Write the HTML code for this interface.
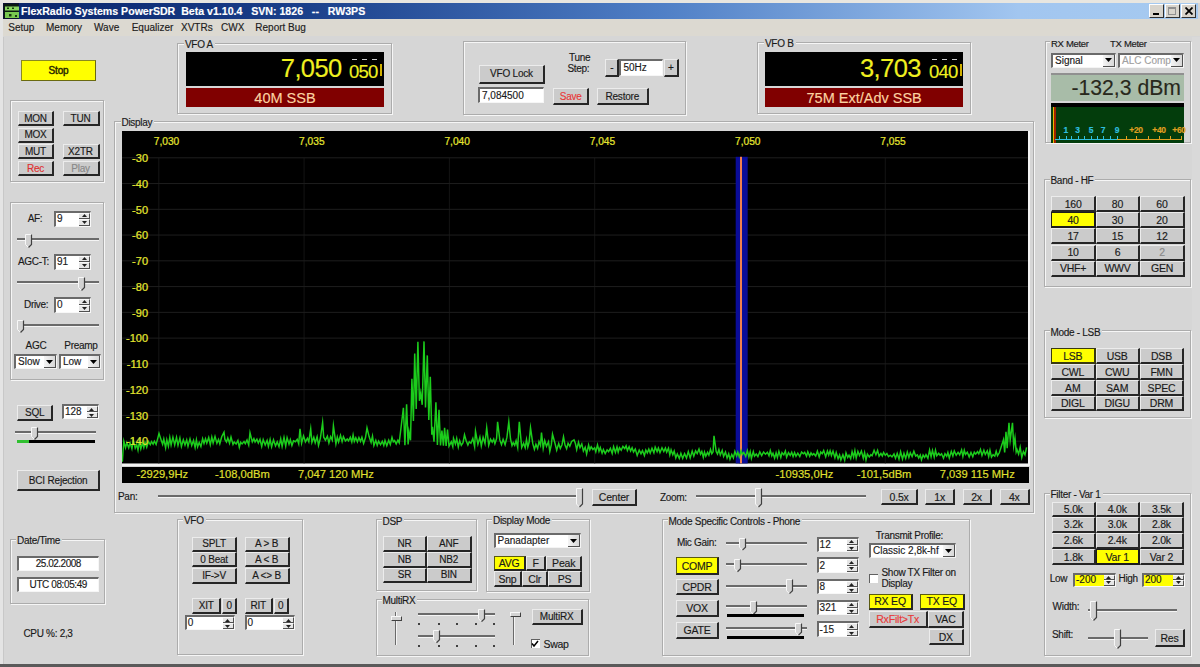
<!DOCTYPE html><html><head><meta charset="utf-8"><style>
*{margin:0;padding:0;box-sizing:border-box}
html,body{width:1200px;height:667px;overflow:hidden;background:#d6d6d6;font-family:"Liberation Sans",sans-serif;position:relative}
.t,.btn,.btnY,.gl,.spin,.combo,.txt{-webkit-text-stroke:0.15px currentColor}
.a{position:absolute}
.t{position:absolute;white-space:nowrap;line-height:1}
.btn{position:absolute;padding-top:1px;letter-spacing:-0.2px;background:#cbcbcb;border-top:1px solid #ececec;border-left:1px solid #ececec;border-right:2px solid #262626;border-bottom:2px solid #262626;display:flex;align-items:center;justify-content:center;white-space:nowrap;line-height:1}
.btnY{position:absolute;padding-top:1px;letter-spacing:-0.2px;background:#ffff00;border:1px solid #5a5a10;border-right:2px solid #262626;border-bottom:2px solid #262626;display:flex;align-items:center;justify-content:center;white-space:nowrap;line-height:1}
.grp{position:absolute;border:1px solid #acacac;box-shadow:inset 1px 1px 0 #f6f6f6, 1px 1px 0 #f6f6f6}
.gl{position:absolute;background:#d6d6d6;padding:0 2px 0 1px;letter-spacing:-0.3px;line-height:10px;height:10px;color:#1a1a1a;white-space:nowrap}
.spin{position:absolute;border-top:2px solid #6a6a6a;border-left:2px solid #6a6a6a;border-bottom:1px solid #f8f8f8;border-right:1px solid #f8f8f8;font-size:10px;line-height:1;display:flex;align-items:center;padding-left:1px;white-space:nowrap}
.sp{position:absolute;right:0;top:0;bottom:0;width:11px;display:flex;flex-direction:column}
.sp b{flex:1;display:flex;align-items:center;justify-content:center;background:#e6e6e6;border-right:1.5px solid #505050;border-bottom:1px solid #505050;border-top:1px solid #fafafa}
.combo{position:absolute;background:#fff;border-top:2px solid #6a6a6a;border-left:2px solid #6a6a6a;border-bottom:1px solid #f4f4f4;border-right:1px solid #f4f4f4;line-height:1;display:flex;align-items:center;padding-left:2px;white-space:nowrap}
.dd{position:absolute;right:0;top:0;bottom:0;width:12px;background:linear-gradient(90deg,#f4f4f4,#d8d8d8);border-right:1.5px solid #505050;border-bottom:1.5px solid #505050;display:flex;align-items:center;justify-content:center}
.txt{position:absolute;background:#fff;border-top:2px solid #6a6a6a;border-left:2px solid #6a6a6a;border-bottom:1px solid #f6f6f6;border-right:1px solid #f6f6f6;line-height:1;display:flex;align-items:center;white-space:nowrap;font-size:10px;color:#1a1a1a}
</style></head><body>
<div class="a" style="left:0px;top:0px;width:1200px;height:3px;background:#e8e6e0;"></div>
<div class="a" style="left:0px;top:0px;width:3px;height:667px;background:#e4e4e4;"></div>
<div class="a" style="left:3px;top:37px;width:1px;height:627px;background:#c8c8c8;"></div>
<div class="a" style="left:3px;top:3px;width:1195px;height:16.3px;background:linear-gradient(90deg,#0a246a 0%,#1a3f8a 25%,#4f7fc6 55%,#a2c6f0 85%,#a6caf0 100%);"></div>
<svg class="a" style="left:3px;top:3px" width="16" height="16" viewBox="0 0 16 16"><rect width="16" height="16" fill="#0a1030"/><rect x="1" y="1" width="14" height="14" fill="#0a1a10"/><path d="M2 3.5H17V7.5H2Z" fill="#88d860"/><path d="M2 9H17V15H2Z" fill="#78c850"/><rect x="4" y="4.5" width="2" height="1.5" fill="#1a3a10"/><rect x="9" y="4.5" width="2" height="1.5" fill="#1a3a10"/><rect x="6" y="11" width="2.5" height="2.5" fill="#1a3a10"/><rect x="12" y="12" width="2" height="2" fill="#1a3a10"/></svg>
<div class="t" style="left:21px;top:5.8px;font-size:10.6px;color:#ffffff;letter-spacing:0px;font-weight:bold;">FlexRadio Systems PowerSDR&nbsp; Beta v1.10.4 &nbsp; SVN: 1826 &nbsp; -- &nbsp; RW3PS</div>
<div class="a" style="left:1149px;top:4px;width:15px;height:14px;background:#d8d4cc;border-top:1px solid #fff;border-left:1px solid #fff;border-right:1px solid #303030;border-bottom:1px solid #303030;"></div>
<div class="a" style="left:1165px;top:4px;width:15px;height:14px;background:#d8d4cc;border-top:1px solid #fff;border-left:1px solid #fff;border-right:1px solid #303030;border-bottom:1px solid #303030;"></div>
<div class="a" style="left:1181px;top:4px;width:15px;height:14px;background:#d8d4cc;border-top:1px solid #fff;border-left:1px solid #fff;border-right:1px solid #303030;border-bottom:1px solid #303030;"></div>
<div class="a" style="left:1153px;top:13px;width:6px;height:2px;background:#000;"></div>
<div class="a" style="left:1168px;top:7px;width:8px;height:8px;border:1px solid #909090;border-top:2px solid #909090;"></div>
<svg class="a" style="left:1185px;top:7px" width="8" height="8" viewBox="0 0 8 8"><path d="M0.5 0.5L7.5 7.5M7.5 0.5L0.5 7.5" stroke="#000" stroke-width="1.8"/></svg>
<div class="a" style="left:3px;top:19.3px;width:1197px;height:17px;background:#dcd9d1;"></div>
<div class="t" style="left:8.3px;top:23.2px;font-size:10px;color:#202020;letter-spacing:0px;">Setup</div>
<div class="t" style="left:46px;top:23.2px;font-size:10px;color:#202020;letter-spacing:0px;">Memory</div>
<div class="t" style="left:94px;top:23.2px;font-size:10px;color:#202020;letter-spacing:0px;">Wave</div>
<div class="t" style="left:131.7px;top:23.2px;font-size:10px;color:#202020;letter-spacing:0px;">Equalizer</div>
<div class="t" style="left:181px;top:23.2px;font-size:10px;color:#202020;letter-spacing:0px;">XVTRs</div>
<div class="t" style="left:221px;top:23.2px;font-size:10px;color:#202020;letter-spacing:0px;">CWX</div>
<div class="t" style="left:255.3px;top:23.2px;font-size:10px;color:#202020;letter-spacing:0px;">Report Bug</div>
<div class="btnY" style="left:21px;top:60px;width:75px;height:20.5px;color:#2a2a00;font-size:10px;background:#ffff00;border:1px solid #8a8a20;border-right:1px solid #6a6a10;border-bottom:1.5px solid #6a6a10;-webkit-text-stroke:0.45px #2a2a00;padding-top:2px;"><span>Stop</span></div>
<div class="grp" style="left:9.5px;top:100px;width:94.5px;height:82px;"></div>
<div class="btn" style="left:18px;top:111px;width:36px;height:15px;color:#1a1a1a;font-size:10px;"><span>MON</span></div>
<div class="btn" style="left:62.5px;top:111px;width:37.0px;height:15px;color:#1a1a1a;font-size:10px;"><span>TUN</span></div>
<div class="btn" style="left:18px;top:127.5px;width:36px;height:15.0px;color:#1a1a1a;font-size:10px;"><span>MOX</span></div>
<div class="btn" style="left:18px;top:144px;width:36px;height:15px;color:#1a1a1a;font-size:10px;"><span>MUT</span></div>
<div class="btn" style="left:62.5px;top:144px;width:37.0px;height:15px;color:#1a1a1a;font-size:10px;"><span>X2TR</span></div>
<div class="btn" style="left:18px;top:161px;width:36px;height:15px;color:#e03030;font-size:10px;"><span>Rec</span></div>
<div class="btn" style="left:62.5px;top:161px;width:37.0px;height:15px;color:#888888;font-size:10px;"><span>Play</span></div>
<div class="grp" style="left:10px;top:201.5px;width:94px;height:178.5px;"></div>
<div class="t" style="left:27.7px;top:213.7px;font-size:10px;color:#1a1a1a;letter-spacing:-0.3px;">AF:</div>
<div class="spin" style="left:54px;top:210.5px;width:37px;height:16.0px;background:#ffffff;color:#1a1a1a;"><span>9</span><i class="sp"><b><svg width="5" height="3" viewBox="0 0 5 3"><path d="M0 3H5L2.5 0Z" fill="#202020"/></svg></b><b><svg width="5" height="3" viewBox="0 0 5 3"><path d="M0 0H5L2.5 3Z" fill="#202020"/></svg></b></i></div>
<div class="a" style="left:17px;top:237.5px;width:82px;height:2px;background:#6a6a6a;"></div>
<div class="a" style="left:17px;top:239.5px;width:82px;height:1px;background:#f4f4f4;"></div>
<svg class="a" style="left:24.5px;top:233.5px" width="8" height="14.5" viewBox="0 0 8 14.5"><path d="M0.5 0.5H6.5V10.5L3.5 13.5L0.5 10.5Z" fill="#d2d2d2" stroke="#f8f8f8" stroke-width="1"/><path d="M6.5 0.5V10.5L3.5 13.5" fill="none" stroke="#404040" stroke-width="1.2"/></svg>
<div class="t" style="left:18px;top:256.7px;font-size:10px;color:#1a1a1a;letter-spacing:-0.3px;">AGC-T:</div>
<div class="spin" style="left:54px;top:253.5px;width:37px;height:16.0px;background:#ffffff;color:#1a1a1a;"><span>91</span><i class="sp"><b><svg width="5" height="3" viewBox="0 0 5 3"><path d="M0 3H5L2.5 0Z" fill="#202020"/></svg></b><b><svg width="5" height="3" viewBox="0 0 5 3"><path d="M0 0H5L2.5 3Z" fill="#202020"/></svg></b></i></div>
<div class="a" style="left:17px;top:280.5px;width:82px;height:2px;background:#6a6a6a;"></div>
<div class="a" style="left:17px;top:282.5px;width:82px;height:1px;background:#f4f4f4;"></div>
<svg class="a" style="left:77.5px;top:276.5px" width="8" height="14.5" viewBox="0 0 8 14.5"><path d="M0.5 0.5H6.5V10.5L3.5 13.5L0.5 10.5Z" fill="#d2d2d2" stroke="#f8f8f8" stroke-width="1"/><path d="M6.5 0.5V10.5L3.5 13.5" fill="none" stroke="#404040" stroke-width="1.2"/></svg>
<div class="t" style="left:24px;top:299.7px;font-size:10px;color:#1a1a1a;letter-spacing:-0.3px;">Drive:</div>
<div class="spin" style="left:54px;top:296.5px;width:37px;height:16.0px;background:#ffffff;color:#1a1a1a;"><span>0</span><i class="sp"><b><svg width="5" height="3" viewBox="0 0 5 3"><path d="M0 3H5L2.5 0Z" fill="#202020"/></svg></b><b><svg width="5" height="3" viewBox="0 0 5 3"><path d="M0 0H5L2.5 3Z" fill="#202020"/></svg></b></i></div>
<div class="a" style="left:17px;top:323.5px;width:82px;height:2px;background:#6a6a6a;"></div>
<div class="a" style="left:17px;top:325.5px;width:82px;height:1px;background:#f4f4f4;"></div>
<svg class="a" style="left:17.3px;top:319.5px" width="8" height="13.5" viewBox="0 0 8 13.5"><path d="M0.5 0.5H6.5V9.5L3.5 12.5L0.5 9.5Z" fill="#d2d2d2" stroke="#f8f8f8" stroke-width="1"/><path d="M6.5 0.5V9.5L3.5 12.5" fill="none" stroke="#404040" stroke-width="1.2"/></svg>
<div class="t" style="left:25.6px;top:340.7px;font-size:10px;color:#1a1a1a;letter-spacing:-0.3px;">AGC</div>
<div class="t" style="left:64.3px;top:340.7px;font-size:10px;color:#1a1a1a;letter-spacing:-0.3px;">Preamp</div>
<div class="combo" style="left:14px;top:354.3px;width:43px;height:15.199999999999989px;color:#1a1a1a;font-size:10px;"><span>Slow</span><i class="dd"><svg width="7" height="4" viewBox="0 0 7 4"><path d="M0 0H7L3.5 4Z" fill="#000"/></svg></i></div>
<div class="combo" style="left:59px;top:354.3px;width:42px;height:15.199999999999989px;color:#1a1a1a;font-size:10px;"><span>Low</span><i class="dd"><svg width="7" height="4" viewBox="0 0 7 4"><path d="M0 0H7L3.5 4Z" fill="#000"/></svg></i></div>
<div class="btn" style="left:17.3px;top:405px;width:35.7px;height:16px;color:#1a1a1a;font-size:10px;"><span>SQL</span></div>
<div class="spin" style="left:62px;top:404px;width:36.599999999999994px;height:15px;background:#ffffff;color:#1a1a1a;"><span>128</span><i class="sp"><b><svg width="5" height="3" viewBox="0 0 5 3"><path d="M0 3H5L2.5 0Z" fill="#202020"/></svg></b><b><svg width="5" height="3" viewBox="0 0 5 3"><path d="M0 0H5L2.5 3Z" fill="#202020"/></svg></b></i></div>
<div class="a" style="left:15px;top:431px;width:80.6px;height:2px;background:#6a6a6a;"></div>
<div class="a" style="left:15px;top:433px;width:80.6px;height:1px;background:#f4f4f4;"></div>
<svg class="a" style="left:31.3px;top:427px" width="8" height="13.5" viewBox="0 0 8 13.5"><path d="M0.5 0.5H6.5V9.5L3.5 12.5L0.5 9.5Z" fill="#d2d2d2" stroke="#f8f8f8" stroke-width="1"/><path d="M6.5 0.5V9.5L3.5 12.5" fill="none" stroke="#404040" stroke-width="1.2"/></svg>
<div class="a" style="left:16.5px;top:440px;width:78.3px;height:3px;background:#000;"></div>
<div class="a" style="left:16.5px;top:440px;width:12.4px;height:3px;background:#30c030;"></div>
<div class="btn" style="left:17.3px;top:470px;width:82.7px;height:21px;color:#1a1a1a;font-size:10px;"><span>BCI Rejection</span></div>
<div class="grp" style="left:10.4px;top:538.5px;width:94.39999999999999px;height:65.70000000000005px;"></div>
<div class="gl" style="left:16px;top:536.1px;font-size:10px;">Date/Time</div>
<div class="txt" style="left:17px;top:556px;width:81.6px;height:15px;justify-content:center;font-size:10px;letter-spacing:-0.5px;">25.02.2008</div>
<div class="txt" style="left:17px;top:576.8px;width:81.6px;height:15.2px;justify-content:center;font-size:10px;letter-spacing:-0.4px;">UTC 08:05:49</div>
<div class="t" style="left:23.4px;top:629.0px;font-size:10px;color:#1a1a1a;letter-spacing:-0.3px;">CPU %: 2,3</div>
<div class="grp" style="left:177.3px;top:42.7px;width:215.0px;height:71.8px;"></div>
<div class="gl" style="left:184px;top:40.3px;font-size:10px;">VFO A</div>
<div class="a" style="left:185.7px;top:52.3px;width:198.6px;height:33.5px;background:#000;"></div>
<div class="t" style="left:280.8px;top:56.2px;font-size:25.5px;color:#f0f020;letter-spacing:0px;letter-spacing:-0.6px;">7,050</div>
<div class="t" style="left:349px;top:63.3px;font-size:18.5px;color:#f0f020;letter-spacing:0px;letter-spacing:-0.8px;">050</div>
<div class="a" style="left:352px;top:59px;width:5px;height:1px;background:#c8c8c8;"></div>
<div class="a" style="left:362px;top:59px;width:5px;height:1px;background:#c8c8c8;"></div>
<div class="a" style="left:372px;top:59px;width:5px;height:1px;background:#c8c8c8;"></div>
<div class="a" style="left:380px;top:64px;width:1.5px;height:12px;background:#d0b000;"></div>
<div class="a" style="left:185.7px;top:88.3px;width:198.6px;height:19.2px;background:#800000;"></div>
<div class="t" style="left:185.7px;top:90.6px;font-size:14.5px;color:#fcd2a0;letter-spacing:0px;width:198.6px;text-align:center;">40M SSB</div>
<div class="grp" style="left:757.3px;top:41.7px;width:214.10000000000002px;height:72.8px;"></div>
<div class="gl" style="left:764px;top:39.3px;font-size:10px;">VFO B</div>
<div class="a" style="left:765.3px;top:52.3px;width:197.7px;height:33.5px;background:#000;"></div>
<div class="t" style="left:860px;top:56.2px;font-size:25.5px;color:#f0f020;letter-spacing:0px;letter-spacing:-0.6px;">3,703</div>
<div class="t" style="left:929px;top:63.3px;font-size:18.5px;color:#f0f020;letter-spacing:0px;letter-spacing:-0.8px;">040</div>
<div class="a" style="left:932px;top:59px;width:5px;height:1px;background:#c8c8c8;"></div>
<div class="a" style="left:942px;top:59px;width:5px;height:1px;background:#c8c8c8;"></div>
<div class="a" style="left:952px;top:59px;width:5px;height:1px;background:#c8c8c8;"></div>
<div class="a" style="left:960px;top:64px;width:1.5px;height:12px;background:#d0b000;"></div>
<div class="a" style="left:765.3px;top:88.3px;width:197.7px;height:19.2px;background:#800000;"></div>
<div class="t" style="left:765.3px;top:90.6px;font-size:14.5px;color:#fcd2a0;letter-spacing:0px;width:197.7px;text-align:center;">75M Ext/Adv SSB</div>
<div class="grp" style="left:463.4px;top:41px;width:222.60000000000002px;height:74px;"></div>
<div class="btn" style="left:478.6px;top:65px;width:66.79999999999995px;height:18.599999999999994px;color:#1a1a1a;font-size:10px;"><span>VFO Lock</span></div>
<div class="txt" style="left:478px;top:87.4px;width:66px;height:16px;padding-left:2px;">7,084500</div>
<div class="btn" style="left:553px;top:88px;width:36.39999999999998px;height:17px;color:#e83838;font-size:10px;"><span>Save</span></div>
<div class="btn" style="left:597px;top:88px;width:51.60000000000002px;height:17px;color:#1a1a1a;font-size:10px;"><span>Restore</span></div>
<div class="t" style="left:569px;top:53.2px;font-size:10px;color:#1a1a1a;letter-spacing:-0.3px;">Tune</div>
<div class="t" style="left:567.5px;top:64.2px;font-size:10px;color:#1a1a1a;letter-spacing:-0.3px;">Step:</div>
<div class="btn" style="left:605px;top:59px;width:14.399999999999977px;height:17.599999999999994px;color:#1a1a1a;font-size:10px;"><span>-</span></div>
<div class="txt" style="left:619.4px;top:59px;width:44px;height:17px;padding-left:2px;">50Hz</div>
<div class="btn" style="left:664px;top:59px;width:14.600000000000023px;height:17.599999999999994px;color:#1a1a1a;font-size:10px;"><span>+</span></div>
<div class="grp" style="left:1044.5px;top:41px;width:146.5px;height:102.4px;"></div>
<div class="a" style="left:1050px;top:39px;width:100px;height:4px;background:#d6d6d6;"></div>
<div class="t" style="left:1110px;top:39.1px;font-size:9.5px;color:#1a1a1a;letter-spacing:-0.3px;">TX Meter</div>
<div class="t" style="left:1051px;top:39.1px;font-size:9.5px;color:#1a1a1a;letter-spacing:-0.3px;">RX Meter</div>
<div class="combo" style="left:1051px;top:52.5px;width:64.59999999999991px;height:15.299999999999997px;color:#1a1a1a;font-size:10px;"><span>Signal</span><i class="dd"><svg width="7" height="4" viewBox="0 0 7 4"><path d="M0 0H7L3.5 4Z" fill="#000"/></svg></i></div>
<div class="combo" style="left:1118px;top:52.5px;width:66px;height:15.299999999999997px;color:#a0a0a0;font-size:10px;"><span>ALC Comp</span><i class="dd"><svg width="7" height="4" viewBox="0 0 7 4"><path d="M0 0H7L3.5 4Z" fill="#000"/></svg></i></div>
<div class="a" style="left:1051px;top:73px;width:133px;height:28px;background:#a8bca8;border-top:2px solid #909090;"></div>
<div class="t" style="left:1051px;top:77.0px;font-size:21.2px;color:#28281c;letter-spacing:0px;width:130px;text-align:right;">-132,3 dBm</div>
<div class="a" style="left:1051px;top:103px;width:133px;height:3.5px;background:#000;"></div>
<div class="a" style="left:1051px;top:106.5px;width:133px;height:36px;background:#033d0c;"></div>
<div class="a" style="left:1052.5px;top:107px;width:1.5px;height:35.5px;background:#e8b800;"></div>
<div class="a" style="left:1054px;top:107px;width:1.5px;height:35.5px;background:#a02000;"></div>
<div class="a" style="left:1055px;top:138.5px;width:62px;height:1.5px;background:#30c0e0;"></div>
<div class="a" style="left:1117px;top:138.5px;width:65px;height:1.5px;background:#e0a020;"></div>
<div class="a" style="left:1059px;top:135.5px;width:1.2px;height:3px;background:#30c0e0;"></div>
<div class="a" style="left:1065.7px;top:135.5px;width:1.2px;height:3px;background:#30c0e0;"></div>
<div class="a" style="left:1071px;top:135.5px;width:1.2px;height:3px;background:#30c0e0;"></div>
<div class="a" style="left:1077.5px;top:135.5px;width:1.2px;height:3px;background:#30c0e0;"></div>
<div class="a" style="left:1084px;top:135.5px;width:1.2px;height:3px;background:#30c0e0;"></div>
<div class="a" style="left:1091px;top:135.5px;width:1.2px;height:3px;background:#30c0e0;"></div>
<div class="a" style="left:1097px;top:135.5px;width:1.2px;height:3px;background:#30c0e0;"></div>
<div class="a" style="left:1103px;top:135.5px;width:1.2px;height:3px;background:#30c0e0;"></div>
<div class="a" style="left:1110px;top:135.5px;width:1.2px;height:3px;background:#30c0e0;"></div>
<div class="a" style="left:1117px;top:135.5px;width:1.2px;height:3px;background:#30c0e0;"></div>
<div class="a" style="left:1126px;top:135.5px;width:1.2px;height:3px;background:#e0a020;"></div>
<div class="a" style="left:1136px;top:135.5px;width:1.2px;height:3px;background:#e0a020;"></div>
<div class="a" style="left:1148px;top:135.5px;width:1.2px;height:3px;background:#e0a020;"></div>
<div class="a" style="left:1159px;top:135.5px;width:1.2px;height:3px;background:#e0a020;"></div>
<div class="a" style="left:1170px;top:135.5px;width:1.2px;height:3px;background:#e0a020;"></div>
<div class="a" style="left:1181px;top:135.5px;width:1.2px;height:3px;background:#e0a020;"></div>
<div class="t" style="left:1062.7px;top:125.9px;font-size:8.5px;color:#30c0e0;letter-spacing:-0.3px;font-weight:bold;width:6px;text-align:center;">1</div>
<div class="t" style="left:1074.5px;top:125.9px;font-size:8.5px;color:#30c0e0;letter-spacing:-0.3px;font-weight:bold;width:6px;text-align:center;">3</div>
<div class="t" style="left:1088px;top:125.9px;font-size:8.5px;color:#30c0e0;letter-spacing:-0.3px;font-weight:bold;width:6px;text-align:center;">5</div>
<div class="t" style="left:1100px;top:125.9px;font-size:8.5px;color:#30c0e0;letter-spacing:-0.3px;font-weight:bold;width:6px;text-align:center;">7</div>
<div class="t" style="left:1114px;top:125.9px;font-size:8.5px;color:#30c0e0;letter-spacing:-0.3px;font-weight:bold;width:6px;text-align:center;">9</div>
<div class="t" style="left:1128px;top:125.9px;font-size:8.5px;color:#e0a020;letter-spacing:-0.3px;font-weight:bold;width:16px;text-align:center;letter-spacing:-0.3px;">+20</div>
<div class="t" style="left:1151px;top:125.9px;font-size:8.5px;color:#e0a020;letter-spacing:-0.3px;font-weight:bold;width:16px;text-align:center;letter-spacing:-0.3px;">+40</div>
<div class="t" style="left:1171px;top:125.9px;font-size:8.5px;color:#e0a020;letter-spacing:-0.3px;font-weight:bold;width:16px;text-align:center;letter-spacing:-0.3px;">+60</div>
<div class="grp" style="left:114.3px;top:120.8px;width:920.2px;height:392.49999999999994px;"></div>
<div class="gl" style="left:120.5px;top:118.4px;font-size:10px;">Display</div>
<svg class="a" style="left:122px;top:131.2px" width="906" height="332.40000000000003" viewBox="122 131.2 906 332.40000000000003"><rect x="122" y="131.2" width="906" height="332.40000000000003" fill="#000"/><line x1="158.8" y1="158" x2="158.8" y2="463.6" stroke="#141414" stroke-width="1"/><line x1="304.1" y1="158" x2="304.1" y2="463.6" stroke="#141414" stroke-width="1"/><line x1="449.40000000000003" y1="158" x2="449.40000000000003" y2="463.6" stroke="#141414" stroke-width="1"/><line x1="594.7" y1="158" x2="594.7" y2="463.6" stroke="#141414" stroke-width="1"/><line x1="740.0" y1="158" x2="740.0" y2="463.6" stroke="#141414" stroke-width="1"/><line x1="885.3" y1="158" x2="885.3" y2="463.6" stroke="#141414" stroke-width="1"/><line x1="122" y1="158.0" x2="1028" y2="158.0" stroke="#1e1e1e" stroke-width="1"/><line x1="122" y1="183.76" x2="1028" y2="183.76" stroke="#1e1e1e" stroke-width="1"/><line x1="122" y1="209.52" x2="1028" y2="209.52" stroke="#1e1e1e" stroke-width="1"/><line x1="122" y1="235.28" x2="1028" y2="235.28" stroke="#1e1e1e" stroke-width="1"/><line x1="122" y1="261.04" x2="1028" y2="261.04" stroke="#1e1e1e" stroke-width="1"/><line x1="122" y1="286.8" x2="1028" y2="286.8" stroke="#1e1e1e" stroke-width="1"/><line x1="122" y1="312.56" x2="1028" y2="312.56" stroke="#1e1e1e" stroke-width="1"/><line x1="122" y1="338.32000000000005" x2="1028" y2="338.32000000000005" stroke="#1e1e1e" stroke-width="1"/><line x1="122" y1="364.08000000000004" x2="1028" y2="364.08000000000004" stroke="#1e1e1e" stroke-width="1"/><line x1="122" y1="389.84000000000003" x2="1028" y2="389.84000000000003" stroke="#1e1e1e" stroke-width="1"/><line x1="122" y1="415.6" x2="1028" y2="415.6" stroke="#1e1e1e" stroke-width="1"/><line x1="122" y1="441.36" x2="1028" y2="441.36" stroke="#1e1e1e" stroke-width="1"/><rect x="735.7" y="157" width="12" height="306.6" fill="#0a0c98"/><rect x="740" y="157" width="2" height="306.6" fill="#f08050"/><polyline points="122.3,462.0 123.0,452.0 123.8,441.5 125.5,448.0 126.8,442.9 128.7,448.0 130.1,443.1 131.9,449.0 133.3,440.3 135.2,448.3 136.7,444.7 138.0,450.3 139.3,441.9 140.8,449.0 142.4,442.9 143.8,447.7 145.0,442.5 146.7,447.5 148.4,441.7 150.3,444.8 151.5,441.8 153.1,444.3 154.4,441.4 156.1,444.6 157.6,439.1 159.0,433.6 161.3,440.6 162.6,444.4 163.8,439.2 165.6,448.0 166.8,440.0 168.4,446.4 169.8,437.7 171.1,445.1 172.9,437.4 174.7,445.1 176.5,437.5 178.0,445.6 179.9,438.3 181.4,446.6 183.3,440.1 185.0,445.3 186.7,440.1 188.0,446.5 190.0,439.1 191.7,445.7 193.5,440.7 195.1,447.7 196.4,440.1 197.6,447.0 199.2,442.7 200.9,446.8 202.6,439.0 204.0,443.7 205.5,439.0 206.8,443.2 208.7,437.7 210.3,444.8 211.8,437.4 213.1,443.2 215.0,436.6 216.9,443.4 218.5,439.6 219.8,444.0 221.7,436.9 224.0,432.5 224.9,439.6 226.5,442.2 227.8,438.1 229.5,443.5 231.0,437.3 233.0,444.6 234.2,442.2 236.1,444.2 237.9,440.7 239.3,447.4 240.6,442.5 242.1,444.1 244.0,441.8 245.3,443.9 247.0,440.3 248.7,445.3 250.0,433.0 252.3,442.1 253.9,438.9 255.1,442.2 256.9,439.4 258.3,443.3 260.0,439.5 261.7,446.7 263.2,439.9 265.2,445.2 267.1,440.6 268.4,446.6 270.1,439.7 271.6,447.0 273.5,440.1 275.5,446.1 277.2,442.1 279.0,446.9 280.7,439.1 282.1,446.7 284.0,437.7 285.7,446.2 287.1,437.9 289.0,444.3 290.3,439.9 291.9,445.7 293.5,441.1 295.4,442.0 297.2,439.5 298.7,444.0 300.0,429.0 301.6,443.3 303.5,436.1 305.4,442.0 307.4,438.5 308.8,441.9 310.7,429.0 311.9,442.6 313.8,437.5 315.2,443.0 317.1,436.9 318.5,445.5 320.4,438.2 322.6,422.7 323.7,437.4 325.4,440.4 327.4,436.5 328.9,443.1 330.6,436.8 332.3,440.4 333.4,426.0 335.9,444.1 337.3,437.3 338.6,442.2 340.5,435.5 342.1,441.8 343.4,436.8 345.4,441.1 347.2,439.2 348.5,441.1 350.3,437.5 351.8,442.2 353.1,435.3 354.3,441.6 355.8,438.0 357.4,442.0 358.9,437.8 360.5,441.6 361.9,437.5 363.6,443.7 365.5,437.8 367.0,428.0 369.1,436.8 371.1,442.7 372.5,436.4 373.9,445.8 375.8,440.6 377.2,445.4 378.6,441.4 380.5,444.9 382.3,441.5 383.8,445.6 385.0,440.7 386.8,445.9 388.7,440.4 390.3,444.7 392.0,437.7 393.3,442.1 394.6,440.8 396.2,444.1 397.9,440.5 399.2,443.0 403.4,408.0 404.9,445.5 406.6,404.4 408.1,444.6 409.0,432.0 410.5,440.5 411.9,379.0 413.4,421.3 414.7,353.8 416.2,409.1 417.9,342.0 419.4,401.0 420.7,393.0 422.2,405.0 424.0,341.6 425.5,407.8 427.3,355.6 428.8,420.3 430.3,377.0 431.8,435.0 432.5,427.0 434.0,442.0 435.9,402.5 437.4,445.2 439.0,410.0 440.5,445.6 441.9,430.7 443.4,445.8 444.6,428.0 446.1,446.1 447.5,429.7 449.0,446.4 451.3,442.0 452.8,446.8 453.5,438.7 455.4,444.3 456.7,438.7 458.3,447.3 459.7,440.9 461.3,445.6 463.0,442.9 464.5,435.0 466.1,440.7 467.9,445.3 469.3,442.0 470.9,443.4 472.8,438.7 474.6,446.8 475.5,431.5 477.9,444.5 479.9,437.4 481.3,446.1 483.1,437.5 485.0,443.7 486.7,428.0 488.7,445.4 490.5,439.4 492.2,442.3 493.7,439.3 494.9,443.9 496.6,438.8 497.6,422.0 499.8,440.1 501.5,444.9 503.1,439.6 505.1,444.9 506.9,437.6 508.8,422.0 510.5,439.2 512.0,445.8 513.2,442.9 514.7,445.5 516.1,440.8 517.7,447.8 519.3,422.0 521.7,447.7 523.6,443.5 525.2,447.9 526.5,439.7 527.8,447.3 529.1,442.5 530.5,428.0 532.8,443.9 534.4,449.6 535.9,444.5 537.6,448.7 539.0,441.8 540.5,445.6 541.5,432.7 543.2,448.6 544.7,440.8 546.5,446.5 548.5,441.9 549.8,451.7 551.3,445.1 552.5,434.5 554.9,443.2 556.7,450.4 558.7,443.7 560.3,448.6 562.0,444.9 563.5,437.0 565.0,445.3 566.6,449.0 568.1,443.4 569.8,446.5 571.6,441.6 574.0,440.0 575.4,443.7 576.7,449.9 578.5,442.4 580.0,447.8 581.8,444.1 583.4,451.1 585.2,447.4 586.6,454.1 588.6,445.3 589.8,450.1 591.2,447.0 592.9,449.7 594.6,448.0 595.8,451.9 597.5,445.1 599.0,451.5 600.3,447.8 602.1,453.4 603.4,449.7 605.2,453.7 607.1,450.0 608.6,451.9 610.4,448.5 612.2,453.7 613.6,447.0 615.4,452.7 617.0,447.1 618.2,452.2 619.5,447.9 621.2,450.4 622.9,446.7 624.7,448.8 626.1,446.0 627.4,450.7 629.1,447.0 630.6,451.3 632.1,448.0 633.5,452.2 635.3,449.3 637.2,455.7 639.2,450.3 641.0,453.9 642.5,450.8 644.4,455.7 645.8,450.2 647.3,453.1 648.8,449.4 650.2,453.3 652.0,448.4 653.9,453.0 655.2,447.4 657.1,451.8 658.4,448.2 660.0,452.8 662.0,448.0 663.8,451.7 665.4,448.2 666.7,452.3 668.5,448.4 669.8,455.1 671.1,450.0 672.8,455.0 674.2,451.2 675.8,458.1 677.3,454.1 679.3,458.6 680.9,453.5 682.7,458.6 684.6,453.8 686.5,458.2 688.3,451.8 690.2,458.1 692.2,451.3 693.8,456.4 695.6,451.1 697.2,453.8 699.0,449.3 700.5,454.3 701.8,451.6 703.3,457.5 704.5,452.3 705.8,456.4 707.6,452.6 708.9,455.4 710.5,449.6 711.8,453.9 713.1,452.0 714.0,436.0 716.2,451.8 717.5,454.3 718.9,449.8 720.3,455.2 722.2,450.7 723.6,456.6 725.5,452.3 727.1,458.3 728.7,454.0 730.0,459.5 731.8,454.7 733.4,458.2 734.9,451.5 736.6,456.1 737.8,452.4 739.3,457.2 741.1,450.9 742.4,454.6 743.8,452.7 745.7,456.6 747.4,450.8 748.9,457.3 750.2,452.1 751.4,458.6 753.3,451.8 754.5,456.3 756.3,454.2 757.9,456.8 759.8,452.1 761.7,455.8 763.6,452.2 765.5,454.4 767.4,452.5 769.0,456.0 770.3,450.8 771.8,456.0 773.0,453.5 774.6,458.4 776.1,453.0 777.4,457.8 778.9,451.6 780.8,457.6 782.0,452.8 783.8,455.1 785.4,451.3 786.6,457.3 788.5,452.8 790.2,455.7 791.7,452.5 793.1,456.7 794.6,452.8 796.0,456.5 797.8,453.4 799.8,456.7 801.6,452.3 803.4,453.9 804.7,452.6 806.5,456.4 807.8,451.9 809.7,456.5 811.0,453.1 812.3,455.2 813.8,453.9 815.7,456.2 817.4,451.4 819.2,457.2 820.7,452.2 822.2,453.9 823.7,450.7 825.7,456.9 827.4,451.2 828.7,455.3 830.1,451.1 831.4,455.7 833.0,451.4 834.9,457.9 836.2,452.7 838.1,459.0 839.6,455.1 840.9,460.2 842.9,454.9 844.7,460.3 846.0,453.0 847.7,457.7 849.0,455.3 850.7,458.9 852.1,451.9 853.6,457.2 854.9,451.0 856.2,458.2 857.9,451.7 859.5,455.8 861.4,451.2 863.3,458.3 864.6,452.8 866.0,460.2 867.4,454.3 869.3,457.1 870.9,454.9 872.1,456.0 874.1,450.5 875.9,455.0 877.6,450.7 879.1,456.4 880.9,453.7 882.3,456.2 883.6,452.6 885.3,455.5 886.9,453.7 888.5,456.9 890.3,455.4 892.0,457.1 894.0,454.2 895.5,458.4 897.2,453.5 899.0,459.3 900.6,452.0 902.5,459.2 904.0,453.5 905.7,458.6 907.3,452.2 908.9,457.6 910.3,453.0 912.1,456.7 913.9,451.4 915.7,456.2 917.4,455.1 918.7,458.2 920.3,455.3 921.5,460.1 923.1,455.3 924.6,457.7 926.0,454.8 927.9,458.4 929.6,450.2 931.1,456.9 932.5,450.6 934.2,457.3 935.5,450.5 936.8,456.0 938.7,453.5 940.1,455.5 941.6,454.0 943.5,458.4 945.0,453.9 946.7,456.5 947.9,452.7 949.3,458.2 951.3,451.6 952.9,456.2 954.3,451.1 956.2,455.4 958.1,452.5 959.7,455.0 961.6,450.1 962.9,456.7 964.3,450.5 965.5,454.7 967.3,452.4 969.2,457.1 971.0,452.6 972.8,456.9 974.3,452.4 975.7,454.3 977.5,451.9 978.8,454.1 980.5,449.7 982.0,455.7 983.9,450.5 985.3,454.7 987.3,451.1 988.7,456.9 990.0,450.6 991.5,457.3 993.1,454.9 994.8,456.4 996.2,451.5 997.5,455.9 999.3,453.0 1003.5,440.0 1004.7,452.6 1006.0,432.0 1007.2,448.4 1009.0,423.0 1010.2,440.2 1012.5,423.0 1013.7,446.1 1015.0,438.0 1016.2,452.1 1017.0,449.7 1018.6,454.3 1020.2,447.4 1021.8,457.6 1023.4,451.8 1025.0,454.9 1026.6,447.5" fill="none" stroke="#1ccc1c" stroke-width="1.5" stroke-linejoin="miter" stroke-miterlimit="10"/><text x="153.8" y="145.3" font-family="Liberation Sans" font-size="11" fill="#e4e430" stroke="#e4e430" stroke-width="0.25" textLength="25.5" lengthAdjust="spacingAndGlyphs">7,030</text><text x="299.1" y="145.3" font-family="Liberation Sans" font-size="11" fill="#e4e430" stroke="#e4e430" stroke-width="0.25" textLength="25.5" lengthAdjust="spacingAndGlyphs">7,035</text><text x="444.40000000000003" y="145.3" font-family="Liberation Sans" font-size="11" fill="#e4e430" stroke="#e4e430" stroke-width="0.25" textLength="25.5" lengthAdjust="spacingAndGlyphs">7,040</text><text x="589.7" y="145.3" font-family="Liberation Sans" font-size="11" fill="#e4e430" stroke="#e4e430" stroke-width="0.25" textLength="25.5" lengthAdjust="spacingAndGlyphs">7,045</text><text x="735.0" y="145.3" font-family="Liberation Sans" font-size="11" fill="#e4e430" stroke="#e4e430" stroke-width="0.25" textLength="25.5" lengthAdjust="spacingAndGlyphs">7,050</text><text x="880.3" y="145.3" font-family="Liberation Sans" font-size="11" fill="#e4e430" stroke="#e4e430" stroke-width="0.25" textLength="25.5" lengthAdjust="spacingAndGlyphs">7,055</text><text x="148" y="162.2" font-family="Liberation Sans" font-size="11" fill="#e4e430" stroke="#e4e430" stroke-width="0.25" text-anchor="end">-30</text><text x="148" y="187.95999999999998" font-family="Liberation Sans" font-size="11" fill="#e4e430" stroke="#e4e430" stroke-width="0.25" text-anchor="end">-40</text><text x="148" y="213.72" font-family="Liberation Sans" font-size="11" fill="#e4e430" stroke="#e4e430" stroke-width="0.25" text-anchor="end">-50</text><text x="148" y="239.48" font-family="Liberation Sans" font-size="11" fill="#e4e430" stroke="#e4e430" stroke-width="0.25" text-anchor="end">-60</text><text x="148" y="265.24" font-family="Liberation Sans" font-size="11" fill="#e4e430" stroke="#e4e430" stroke-width="0.25" text-anchor="end">-70</text><text x="148" y="291.0" font-family="Liberation Sans" font-size="11" fill="#e4e430" stroke="#e4e430" stroke-width="0.25" text-anchor="end">-80</text><text x="148" y="316.76" font-family="Liberation Sans" font-size="11" fill="#e4e430" stroke="#e4e430" stroke-width="0.25" text-anchor="end">-90</text><text x="148" y="342.52000000000004" font-family="Liberation Sans" font-size="11" fill="#e4e430" stroke="#e4e430" stroke-width="0.25" text-anchor="end">-100</text><text x="148" y="368.28000000000003" font-family="Liberation Sans" font-size="11" fill="#e4e430" stroke="#e4e430" stroke-width="0.25" text-anchor="end">-110</text><text x="148" y="394.04" font-family="Liberation Sans" font-size="11" fill="#e4e430" stroke="#e4e430" stroke-width="0.25" text-anchor="end">-120</text><text x="148" y="419.8" font-family="Liberation Sans" font-size="11" fill="#e4e430" stroke="#e4e430" stroke-width="0.25" text-anchor="end">-130</text><text x="148" y="445.56" font-family="Liberation Sans" font-size="11" fill="#e4e430" stroke="#e4e430" stroke-width="0.25" text-anchor="end">-140</text></svg>
<div class="a" style="left:122px;top:463.6px;width:906px;height:2.8px;background:#f4f4f4;"></div>
<div class="a" style="left:1028px;top:131.2px;width:2px;height:335px;background:#f4f4f4;"></div>
<div class="a" style="left:122px;top:466.6px;width:907px;height:16px;background:#000;"></div>
<div class="t" style="left:136.5px;top:468.5px;font-size:11.2px;color:#e0e030;letter-spacing:0px;">-2929,9Hz</div>
<div class="t" style="left:215px;top:468.5px;font-size:11.2px;color:#e0e030;letter-spacing:0px;">-108,0dBm</div>
<div class="t" style="left:298px;top:468.5px;font-size:11.2px;color:#e0e030;letter-spacing:0px;">7,047 120 MHz</div>
<div class="t" style="left:775.5px;top:468.5px;font-size:11.2px;color:#e0e030;letter-spacing:0px;">-10935,0Hz</div>
<div class="t" style="left:856.7px;top:468.5px;font-size:11.2px;color:#e0e030;letter-spacing:0px;">-101,5dBm</div>
<div class="t" style="left:939.7px;top:468.5px;font-size:11.2px;color:#e0e030;letter-spacing:0px;">7,039 115 MHz</div>
<div class="t" style="left:118px;top:492.2px;font-size:10px;color:#1a1a1a;letter-spacing:-0.3px;">Pan:</div>
<div class="a" style="left:157.5px;top:495px;width:423.5px;height:2px;background:#6a6a6a;"></div>
<div class="a" style="left:157.5px;top:497px;width:423.5px;height:1px;background:#f4f4f4;"></div>
<svg class="a" style="left:576px;top:488px" width="8" height="20" viewBox="0 0 8 20"><path d="M0.5 0.5H6.5V16L3.5 19L0.5 16Z" fill="#d2d2d2" stroke="#f8f8f8" stroke-width="1"/><path d="M6.5 0.5V16L3.5 19" fill="none" stroke="#404040" stroke-width="1.2"/></svg>
<div class="btn" style="left:592px;top:489px;width:45px;height:17px;color:#1a1a1a;font-size:10.5px;"><span>Center</span></div>
<div class="t" style="left:660px;top:492.7px;font-size:10px;color:#1a1a1a;letter-spacing:-0.3px;">Zoom:</div>
<div class="a" style="left:696px;top:495px;width:170px;height:2px;background:#6a6a6a;"></div>
<div class="a" style="left:696px;top:497px;width:170px;height:1px;background:#f4f4f4;"></div>
<svg class="a" style="left:755px;top:488px" width="8" height="20" viewBox="0 0 8 20"><path d="M0.5 0.5H6.5V16L3.5 19L0.5 16Z" fill="#d2d2d2" stroke="#f8f8f8" stroke-width="1"/><path d="M6.5 0.5V16L3.5 19" fill="none" stroke="#404040" stroke-width="1.2"/></svg>
<div class="btn" style="left:881.3px;top:489px;width:36.700000000000045px;height:16.30000000000001px;color:#1a1a1a;font-size:10.5px;"><span>0.5x</span></div>
<div class="btn" style="left:925.3px;top:489px;width:29.700000000000045px;height:16.30000000000001px;color:#1a1a1a;font-size:10.5px;"><span>1x</span></div>
<div class="btn" style="left:962.5px;top:489px;width:29.200000000000045px;height:16.30000000000001px;color:#1a1a1a;font-size:10.5px;"><span>2x</span></div>
<div class="btn" style="left:1000px;top:489px;width:29.700000000000045px;height:16.30000000000001px;color:#1a1a1a;font-size:10.5px;"><span>4x</span></div>
<div class="grp" style="left:177.3px;top:518.6px;width:126.0px;height:136.39999999999998px;"></div>
<div class="gl" style="left:183px;top:516.2px;font-size:10px;">VFO</div>
<div class="btn" style="left:192px;top:536.5px;width:45.19999999999999px;height:15.100000000000023px;color:#1a1a1a;font-size:10px;"><span>SPLT</span></div>
<div class="btn" style="left:192px;top:551.6px;width:45.19999999999999px;height:15.899999999999977px;color:#1a1a1a;font-size:10px;"><span>0 Beat</span></div>
<div class="btn" style="left:192px;top:567.5px;width:45.19999999999999px;height:16.200000000000045px;color:#1a1a1a;font-size:10px;"><span>IF-&gt;V</span></div>
<div class="btn" style="left:244.5px;top:536.5px;width:45.10000000000002px;height:15.100000000000023px;color:#1a1a1a;font-size:10px;"><span>A &gt; B</span></div>
<div class="btn" style="left:244.5px;top:551.6px;width:45.10000000000002px;height:15.899999999999977px;color:#1a1a1a;font-size:10px;"><span>A &lt; B</span></div>
<div class="btn" style="left:244.5px;top:567.5px;width:45.10000000000002px;height:16.200000000000045px;color:#1a1a1a;font-size:10px;"><span>A &lt;&gt; B</span></div>
<div class="btn" style="left:192px;top:598.4px;width:29.400000000000006px;height:15.300000000000068px;color:#1a1a1a;font-size:10px;"><span>XIT</span></div>
<div class="btn" style="left:222px;top:598.4px;width:15.199999999999989px;height:15.300000000000068px;color:#1a1a1a;font-size:10px;"><span>0</span></div>
<div class="btn" style="left:244.5px;top:598.4px;width:28.399999999999977px;height:15.300000000000068px;color:#1a1a1a;font-size:10px;"><span>RIT</span></div>
<div class="btn" style="left:274px;top:598.4px;width:14.600000000000023px;height:15.300000000000068px;color:#1a1a1a;font-size:10px;"><span>0</span></div>
<div class="spin" style="left:184.7px;top:615.2px;width:50.30000000000001px;height:14.799999999999955px;background:#ffffff;color:#1a1a1a;"><span>0</span><i class="sp"><b><svg width="5" height="3" viewBox="0 0 5 3"><path d="M0 3H5L2.5 0Z" fill="#202020"/></svg></b><b><svg width="5" height="3" viewBox="0 0 5 3"><path d="M0 0H5L2.5 3Z" fill="#202020"/></svg></b></i></div>
<div class="spin" style="left:244.5px;top:615.2px;width:50.5px;height:14.799999999999955px;background:#ffffff;color:#1a1a1a;"><span>0</span><i class="sp"><b><svg width="5" height="3" viewBox="0 0 5 3"><path d="M0 3H5L2.5 0Z" fill="#202020"/></svg></b><b><svg width="5" height="3" viewBox="0 0 5 3"><path d="M0 0H5L2.5 3Z" fill="#202020"/></svg></b></i></div>
<div class="grp" style="left:375.7px;top:519.2px;width:101.80000000000001px;height:72.29999999999995px;"></div>
<div class="gl" style="left:381.5px;top:516.8px;font-size:10px;">DSP</div>
<div class="btn" style="left:383.2px;top:536.3px;width:43.80000000000001px;height:15.700000000000045px;color:#1a1a1a;font-size:10px;"><span>NR</span></div>
<div class="btn" style="left:427px;top:536.3px;width:44.5px;height:15.700000000000045px;color:#1a1a1a;font-size:10px;"><span>ANF</span></div>
<div class="btn" style="left:383.2px;top:552px;width:43.80000000000001px;height:15.5px;color:#1a1a1a;font-size:10px;"><span>NB</span></div>
<div class="btn" style="left:427px;top:552px;width:44.5px;height:15.5px;color:#1a1a1a;font-size:10px;"><span>NB2</span></div>
<div class="btn" style="left:383.2px;top:567.5px;width:43.80000000000001px;height:15.799999999999955px;color:#1a1a1a;font-size:10px;"><span>SR</span></div>
<div class="btn" style="left:427px;top:567.5px;width:44.5px;height:15.799999999999955px;color:#1a1a1a;font-size:10px;"><span>BIN</span></div>
<div class="grp" style="left:376.4px;top:598.7px;width:212.80000000000007px;height:57.19999999999993px;"></div>
<div class="gl" style="left:381.5px;top:596.3px;font-size:10px;">MultiRX</div>
<div class="a" style="left:394.5px;top:612.4px;width:2px;height:33px;background:#6a6a6a;border-right:1px solid #f4f4f4;"></div>
<div class="a" style="left:391px;top:616px;width:11px;height:5px;background:#d4d4d4;border-top:1px solid #f8f8f8;border-left:1px solid #f8f8f8;border-right:1px solid #404040;border-bottom:1.5px solid #404040;"></div>
<div class="a" style="left:418px;top:613.4px;width:76.60000000000002px;height:2px;background:#6a6a6a;"></div>
<div class="a" style="left:418px;top:615.4px;width:76.60000000000002px;height:1px;background:#f4f4f4;"></div>
<svg class="a" style="left:477.6px;top:608.5px" width="8" height="13.700000000000045" viewBox="0 0 8 13.700000000000045"><path d="M0.5 0.5H6.5V9.700000000000045L3.5 12.700000000000045L0.5 9.700000000000045Z" fill="#d2d2d2" stroke="#f8f8f8" stroke-width="1"/><path d="M6.5 0.5V9.700000000000045L3.5 12.700000000000045" fill="none" stroke="#404040" stroke-width="1.2"/></svg>
<div class="a" style="left:418px;top:634.5px;width:76.60000000000002px;height:2px;background:#6a6a6a;"></div>
<div class="a" style="left:418px;top:636.5px;width:76.60000000000002px;height:1px;background:#f4f4f4;"></div>
<svg class="a" style="left:432.6px;top:630px" width="8" height="13.799999999999955" viewBox="0 0 8 13.799999999999955"><path d="M0.5 0.5H6.5V9.799999999999955L3.5 12.799999999999955L0.5 9.799999999999955Z" fill="#d2d2d2" stroke="#f8f8f8" stroke-width="1"/><path d="M6.5 0.5V9.799999999999955L3.5 12.799999999999955" fill="none" stroke="#404040" stroke-width="1.2"/></svg>
<div class="a" style="left:417.7px;top:623.3px;width:2px;height:2px;background:#404040;"></div>
<div class="a" style="left:417.7px;top:644.8px;width:2px;height:2px;background:#404040;"></div>
<div class="a" style="left:438.2px;top:623.3px;width:2px;height:2px;background:#404040;"></div>
<div class="a" style="left:438.2px;top:644.8px;width:2px;height:2px;background:#404040;"></div>
<div class="a" style="left:456.3px;top:623.3px;width:2px;height:2px;background:#404040;"></div>
<div class="a" style="left:456.3px;top:644.8px;width:2px;height:2px;background:#404040;"></div>
<div class="a" style="left:474.7px;top:623.3px;width:2px;height:2px;background:#404040;"></div>
<div class="a" style="left:474.7px;top:644.8px;width:2px;height:2px;background:#404040;"></div>
<div class="a" style="left:492.7px;top:623.3px;width:2px;height:2px;background:#404040;"></div>
<div class="a" style="left:492.7px;top:644.8px;width:2px;height:2px;background:#404040;"></div>
<div class="a" style="left:513px;top:612.4px;width:2px;height:32.3px;background:#6a6a6a;border-right:1px solid #f4f4f4;"></div>
<div class="a" style="left:509.5px;top:612.4px;width:11px;height:5px;background:#d4d4d4;border-top:1px solid #f8f8f8;border-left:1px solid #f8f8f8;border-right:1px solid #404040;border-bottom:1.5px solid #404040;"></div>
<div class="btn" style="left:531.5px;top:608.5px;width:51.299999999999955px;height:16.600000000000023px;color:#1a1a1a;font-size:10px;"><span>MultiRX</span></div>
<div class="a" style="left:530.5px;top:638.9px;width:9px;height:9px;background:#fff;border-top:1px solid #606060;border-left:1px solid #606060;"></div>
<svg class="a" style="left:531px;top:639.5px" width="8" height="8" viewBox="0 0 8 8"><path d="M1 3.5L3 6L7 1" fill="none" stroke="#000" stroke-width="1.5"/></svg>
<div class="t" style="left:543.6px;top:638.6px;font-size:10.5px;color:#1a1a1a;letter-spacing:-0.3px;">Swap</div>
<div class="grp" style="left:486.4px;top:518.5px;width:103.20000000000005px;height:73.29999999999995px;"></div>
<div class="gl" style="left:492px;top:516.1px;font-size:10px;">Display Mode</div>
<div class="combo" style="left:493.5px;top:533.2px;width:87.29999999999995px;height:15.199999999999932px;color:#1a1a1a;font-size:10px;"><span>Panadapter</span><i class="dd"><svg width="7" height="4" viewBox="0 0 7 4"><path d="M0 0H7L3.5 4Z" fill="#000"/></svg></i></div>
<div class="btnY" style="left:493.5px;top:556px;width:32.299999999999955px;height:15.200000000000045px;color:#1a1a1a;font-size:10.5px;background:#ffff00;"><span>AVG</span></div>
<div class="btn" style="left:525.8px;top:556px;width:20.40000000000009px;height:15.200000000000045px;color:#1a1a1a;font-size:10.5px;"><span>F</span></div>
<div class="btn" style="left:546.2px;top:556px;width:36.0px;height:15.200000000000045px;color:#1a1a1a;font-size:10.5px;"><span>Peak</span></div>
<div class="btn" style="left:493.5px;top:571.2px;width:28.899999999999977px;height:16.09999999999991px;color:#1a1a1a;font-size:10.5px;"><span>Snp</span></div>
<div class="btn" style="left:522.4px;top:571.2px;width:25.600000000000023px;height:16.09999999999991px;color:#1a1a1a;font-size:10.5px;"><span>Clr</span></div>
<div class="btn" style="left:548px;top:571.2px;width:34.200000000000045px;height:16.09999999999991px;color:#1a1a1a;font-size:10.5px;"><span>PS</span></div>
<div class="grp" style="left:661.8px;top:519px;width:308.4000000000001px;height:136.60000000000002px;"></div>
<div class="gl" style="left:667.5px;top:516.6px;font-size:10px;">Mode Specific Controls - Phone</div>
<div class="t" style="left:676.9px;top:538.2px;font-size:10px;color:#1a1a1a;letter-spacing:-0.3px;">Mic Gain:</div>
<div class="a" style="left:725.5px;top:541.7px;width:81.29999999999995px;height:2px;background:#6a6a6a;"></div>
<div class="a" style="left:725.5px;top:543.7px;width:81.29999999999995px;height:1px;background:#f4f4f4;"></div>
<svg class="a" style="left:738.8px;top:537.8px" width="8" height="13.200000000000045" viewBox="0 0 8 13.200000000000045"><path d="M0.5 0.5H6.5V9.200000000000045L3.5 12.200000000000045L0.5 9.200000000000045Z" fill="#d2d2d2" stroke="#f8f8f8" stroke-width="1"/><path d="M6.5 0.5V9.200000000000045L3.5 12.200000000000045" fill="none" stroke="#404040" stroke-width="1.2"/></svg>
<div class="spin" style="left:816.6px;top:536.6px;width:42.39999999999998px;height:15.799999999999955px;background:#ffffff;color:#1a1a1a;"><span>12</span><i class="sp"><b><svg width="5" height="3" viewBox="0 0 5 3"><path d="M0 3H5L2.5 0Z" fill="#202020"/></svg></b><b><svg width="5" height="3" viewBox="0 0 5 3"><path d="M0 0H5L2.5 3Z" fill="#202020"/></svg></b></i></div>
<div class="btnY" style="left:676.4px;top:557.2px;width:42.30000000000007px;height:17.799999999999955px;color:#1a1a1a;font-size:10.5px;background:#ffff00;"><span>COMP</span></div>
<div class="a" style="left:725.5px;top:562.8px;width:81.29999999999995px;height:2px;background:#6a6a6a;"></div>
<div class="a" style="left:725.5px;top:564.8px;width:81.29999999999995px;height:1px;background:#f4f4f4;"></div>
<svg class="a" style="left:734px;top:559px" width="8" height="13.799999999999955" viewBox="0 0 8 13.799999999999955"><path d="M0.5 0.5H6.5V9.799999999999955L3.5 12.799999999999955L0.5 9.799999999999955Z" fill="#d2d2d2" stroke="#f8f8f8" stroke-width="1"/><path d="M6.5 0.5V9.799999999999955L3.5 12.799999999999955" fill="none" stroke="#404040" stroke-width="1.2"/></svg>
<div class="spin" style="left:816.6px;top:557.2px;width:42.39999999999998px;height:15.799999999999955px;background:#ffffff;color:#1a1a1a;"><span>2</span><i class="sp"><b><svg width="5" height="3" viewBox="0 0 5 3"><path d="M0 3H5L2.5 0Z" fill="#202020"/></svg></b><b><svg width="5" height="3" viewBox="0 0 5 3"><path d="M0 0H5L2.5 3Z" fill="#202020"/></svg></b></i></div>
<div class="btn" style="left:676.4px;top:579px;width:42.30000000000007px;height:16.399999999999977px;color:#1a1a1a;font-size:10.5px;"><span>CPDR</span></div>
<div class="a" style="left:725.5px;top:584.7px;width:81.29999999999995px;height:2px;background:#6a6a6a;"></div>
<div class="a" style="left:725.5px;top:586.7px;width:81.29999999999995px;height:1px;background:#f4f4f4;"></div>
<svg class="a" style="left:786.2px;top:579px" width="8" height="15.700000000000045" viewBox="0 0 8 15.700000000000045"><path d="M0.5 0.5H6.5V11.700000000000045L3.5 14.700000000000045L0.5 11.700000000000045Z" fill="#d2d2d2" stroke="#f8f8f8" stroke-width="1"/><path d="M6.5 0.5V11.700000000000045L3.5 14.700000000000045" fill="none" stroke="#404040" stroke-width="1.2"/></svg>
<div class="spin" style="left:816.6px;top:579px;width:42.39999999999998px;height:15.399999999999977px;background:#ffffff;color:#1a1a1a;"><span>8</span><i class="sp"><b><svg width="5" height="3" viewBox="0 0 5 3"><path d="M0 3H5L2.5 0Z" fill="#202020"/></svg></b><b><svg width="5" height="3" viewBox="0 0 5 3"><path d="M0 0H5L2.5 3Z" fill="#202020"/></svg></b></i></div>
<div class="btn" style="left:676.4px;top:600.2px;width:42.30000000000007px;height:16.59999999999991px;color:#1a1a1a;font-size:10.5px;"><span>VOX</span></div>
<div class="a" style="left:725.5px;top:604.8px;width:81.29999999999995px;height:2px;background:#6a6a6a;"></div>
<div class="a" style="left:725.5px;top:606.8px;width:81.29999999999995px;height:1px;background:#f4f4f4;"></div>
<svg class="a" style="left:750.2px;top:601px" width="8" height="14.299999999999955" viewBox="0 0 8 14.299999999999955"><path d="M0.5 0.5H6.5V10.299999999999955L3.5 13.299999999999955L0.5 10.299999999999955Z" fill="#d2d2d2" stroke="#f8f8f8" stroke-width="1"/><path d="M6.5 0.5V10.299999999999955L3.5 13.299999999999955" fill="none" stroke="#404040" stroke-width="1.2"/></svg>
<div class="a" style="left:727.4px;top:614.3px;width:77px;height:3px;background:#000;"></div>
<div class="spin" style="left:816.6px;top:599.8px;width:42.39999999999998px;height:15.700000000000045px;background:#ffffff;color:#1a1a1a;"><span>321</span><i class="sp"><b><svg width="5" height="3" viewBox="0 0 5 3"><path d="M0 3H5L2.5 0Z" fill="#202020"/></svg></b><b><svg width="5" height="3" viewBox="0 0 5 3"><path d="M0 0H5L2.5 3Z" fill="#202020"/></svg></b></i></div>
<div class="btn" style="left:676.4px;top:622px;width:42.30000000000007px;height:16.600000000000023px;color:#1a1a1a;font-size:10.5px;"><span>GATE</span></div>
<div class="a" style="left:725.5px;top:626.7px;width:81.29999999999995px;height:2px;background:#6a6a6a;"></div>
<div class="a" style="left:725.5px;top:628.7px;width:81.29999999999995px;height:1px;background:#f4f4f4;"></div>
<svg class="a" style="left:795.4px;top:622.8px" width="8" height="13.200000000000045" viewBox="0 0 8 13.200000000000045"><path d="M0.5 0.5H6.5V9.200000000000045L3.5 12.200000000000045L0.5 9.200000000000045Z" fill="#d2d2d2" stroke="#f8f8f8" stroke-width="1"/><path d="M6.5 0.5V9.200000000000045L3.5 12.200000000000045" fill="none" stroke="#404040" stroke-width="1.2"/></svg>
<div class="a" style="left:727.4px;top:635.7px;width:77px;height:3px;background:#000;"></div>
<div class="spin" style="left:816.6px;top:621px;width:42.39999999999998px;height:16.399999999999977px;background:#ffffff;color:#1a1a1a;"><span>-15</span><i class="sp"><b><svg width="5" height="3" viewBox="0 0 5 3"><path d="M0 3H5L2.5 0Z" fill="#202020"/></svg></b><b><svg width="5" height="3" viewBox="0 0 5 3"><path d="M0 0H5L2.5 3Z" fill="#202020"/></svg></b></i></div>
<div class="t" style="left:875.7px;top:531.0px;font-size:10px;color:#1a1a1a;letter-spacing:-0.3px;">Transmit Profile:</div>
<div class="combo" style="left:869.1px;top:543.3px;width:86.89999999999998px;height:15.200000000000045px;color:#1a1a1a;font-size:10px;"><span>Classic 2,8k-hf</span><i class="dd"><svg width="7" height="4" viewBox="0 0 7 4"><path d="M0 0H7L3.5 4Z" fill="#000"/></svg></i></div>
<div class="a" style="left:869px;top:573.7px;width:9px;height:9px;background:#fff;border-top:1px solid #606060;border-left:1px solid #606060;"></div>
<div class="t" style="left:881.5px;top:568.2px;font-size:10px;color:#1a1a1a;letter-spacing:-0.3px;">Show TX Filter on</div>
<div class="t" style="left:881.5px;top:579.2px;font-size:10px;color:#1a1a1a;letter-spacing:-0.3px;">Display</div>
<div class="btnY" style="left:868.5px;top:593.7px;width:44.10000000000002px;height:15.899999999999977px;color:#1a1a1a;font-size:10.5px;background:#ffff00;"><span>RX EQ</span></div>
<div class="btnY" style="left:919.8px;top:593.7px;width:45.0px;height:15.899999999999977px;color:#1a1a1a;font-size:10.5px;background:#ffff00;"><span>TX EQ</span></div>
<div class="btn" style="left:868.5px;top:610.7px;width:59.299999999999955px;height:16.899999999999977px;color:#e83838;font-size:10.5px;"><span>RxFilt&gt;Tx</span></div>
<div class="btn" style="left:927.8px;top:610.7px;width:36.30000000000007px;height:16.899999999999977px;color:#1a1a1a;font-size:10.5px;"><span>VAC</span></div>
<div class="btn" style="left:928.5px;top:629px;width:35.60000000000002px;height:16.399999999999977px;color:#1a1a1a;font-size:10.5px;"><span>DX</span></div>
<div class="grp" style="left:1043.8px;top:178.8px;width:147.20000000000005px;height:108.59999999999997px;"></div>
<div class="gl" style="left:1049.5px;top:176.4px;font-size:10px;">Band - HF</div>
<div class="btn" style="left:1051.2px;top:196.4px;width:44.799999999999955px;height:15.900000000000006px;color:#1a1a1a;font-size:10.5px;"><span>160</span></div>
<div class="btn" style="left:1096px;top:196.4px;width:44px;height:15.900000000000006px;color:#1a1a1a;font-size:10.5px;"><span>80</span></div>
<div class="btn" style="left:1140px;top:196.4px;width:45px;height:15.900000000000006px;color:#1a1a1a;font-size:10.5px;"><span>60</span></div>
<div class="btnY" style="left:1051.2px;top:212.3px;width:44.799999999999955px;height:16.099999999999994px;color:#1a1a1a;font-size:10.5px;background:#ffff00;border-color:#1c1c1c;"><span>40</span></div>
<div class="btn" style="left:1096px;top:212.3px;width:44px;height:16.099999999999994px;color:#1a1a1a;font-size:10.5px;"><span>30</span></div>
<div class="btn" style="left:1140px;top:212.3px;width:45px;height:16.099999999999994px;color:#1a1a1a;font-size:10.5px;"><span>20</span></div>
<div class="btn" style="left:1051.2px;top:228.4px;width:44.799999999999955px;height:16.099999999999994px;color:#1a1a1a;font-size:10.5px;"><span>17</span></div>
<div class="btn" style="left:1096px;top:228.4px;width:44px;height:16.099999999999994px;color:#1a1a1a;font-size:10.5px;"><span>15</span></div>
<div class="btn" style="left:1140px;top:228.4px;width:45px;height:16.099999999999994px;color:#1a1a1a;font-size:10.5px;"><span>12</span></div>
<div class="btn" style="left:1051.2px;top:244.5px;width:44.799999999999955px;height:16.100000000000023px;color:#1a1a1a;font-size:10.5px;"><span>10</span></div>
<div class="btn" style="left:1096px;top:244.5px;width:44px;height:16.100000000000023px;color:#1a1a1a;font-size:10.5px;"><span>6</span></div>
<div class="btn" style="left:1140px;top:244.5px;width:45px;height:16.100000000000023px;color:#8a8a8a;font-size:10.5px;"><span>2</span></div>
<div class="btn" style="left:1051.2px;top:260.6px;width:44.799999999999955px;height:16.19999999999999px;color:#1a1a1a;font-size:10.5px;"><span>VHF+</span></div>
<div class="btn" style="left:1096px;top:260.6px;width:44px;height:16.19999999999999px;color:#1a1a1a;font-size:10.5px;"><span>WWV</span></div>
<div class="btn" style="left:1140px;top:260.6px;width:45px;height:16.19999999999999px;color:#1a1a1a;font-size:10.5px;"><span>GEN</span></div>
<div class="grp" style="left:1044px;top:330px;width:147px;height:87.5px;"></div>
<div class="gl" style="left:1049.5px;top:327.6px;font-size:10px;">Mode - LSB</div>
<div class="btnY" style="left:1051px;top:348.3px;width:44.59999999999991px;height:16.0px;color:#1a1a1a;font-size:10.5px;background:#ffff00;border-color:#3a3a10;"><span>LSB</span></div>
<div class="btn" style="left:1095.6px;top:348.3px;width:44.100000000000136px;height:16.0px;color:#1a1a1a;font-size:10.5px;"><span>USB</span></div>
<div class="btn" style="left:1139.7px;top:348.3px;width:44.59999999999991px;height:16.0px;color:#1a1a1a;font-size:10.5px;"><span>DSB</span></div>
<div class="btn" style="left:1051px;top:364.3px;width:44.59999999999991px;height:15.699999999999989px;color:#1a1a1a;font-size:10.5px;"><span>CWL</span></div>
<div class="btn" style="left:1095.6px;top:364.3px;width:44.100000000000136px;height:15.699999999999989px;color:#1a1a1a;font-size:10.5px;"><span>CWU</span></div>
<div class="btn" style="left:1139.7px;top:364.3px;width:44.59999999999991px;height:15.699999999999989px;color:#1a1a1a;font-size:10.5px;"><span>FMN</span></div>
<div class="btn" style="left:1051px;top:380px;width:44.59999999999991px;height:15.699999999999989px;color:#1a1a1a;font-size:10.5px;"><span>AM</span></div>
<div class="btn" style="left:1095.6px;top:380px;width:44.100000000000136px;height:15.699999999999989px;color:#1a1a1a;font-size:10.5px;"><span>SAM</span></div>
<div class="btn" style="left:1139.7px;top:380px;width:44.59999999999991px;height:15.699999999999989px;color:#1a1a1a;font-size:10.5px;"><span>SPEC</span></div>
<div class="btn" style="left:1051px;top:395.7px;width:44.59999999999991px;height:15.800000000000011px;color:#1a1a1a;font-size:10.5px;"><span>DIGL</span></div>
<div class="btn" style="left:1095.6px;top:395.7px;width:44.100000000000136px;height:15.800000000000011px;color:#1a1a1a;font-size:10.5px;"><span>DIGU</span></div>
<div class="btn" style="left:1139.7px;top:395.7px;width:44.59999999999991px;height:15.800000000000011px;color:#1a1a1a;font-size:10.5px;"><span>DRM</span></div>
<div class="grp" style="left:1044px;top:492.6px;width:147.29999999999995px;height:163.69999999999993px;"></div>
<div class="gl" style="left:1049.5px;top:490.2px;font-size:10px;">Filter - Var 1</div>
<div class="btn" style="left:1051.8px;top:501.5px;width:44.200000000000045px;height:15.299999999999955px;color:#1a1a1a;font-size:10.5px;"><span>5.0k</span></div>
<div class="btn" style="left:1096px;top:501.5px;width:43.5px;height:15.299999999999955px;color:#1a1a1a;font-size:10.5px;"><span>4.0k</span></div>
<div class="btn" style="left:1139.5px;top:501.5px;width:44.799999999999955px;height:15.299999999999955px;color:#1a1a1a;font-size:10.5px;"><span>3.5k</span></div>
<div class="btn" style="left:1051.8px;top:516.8px;width:44.200000000000045px;height:15.800000000000068px;color:#1a1a1a;font-size:10.5px;"><span>3.2k</span></div>
<div class="btn" style="left:1096px;top:516.8px;width:43.5px;height:15.800000000000068px;color:#1a1a1a;font-size:10.5px;"><span>3.0k</span></div>
<div class="btn" style="left:1139.5px;top:516.8px;width:44.799999999999955px;height:15.800000000000068px;color:#1a1a1a;font-size:10.5px;"><span>2.8k</span></div>
<div class="btn" style="left:1051.8px;top:532.6px;width:44.200000000000045px;height:16.0px;color:#1a1a1a;font-size:10.5px;"><span>2.6k</span></div>
<div class="btn" style="left:1096px;top:532.6px;width:43.5px;height:16.0px;color:#1a1a1a;font-size:10.5px;"><span>2.4k</span></div>
<div class="btn" style="left:1139.5px;top:532.6px;width:44.799999999999955px;height:16.0px;color:#1a1a1a;font-size:10.5px;"><span>2.0k</span></div>
<div class="btn" style="left:1051.8px;top:548.6px;width:44.200000000000045px;height:16.699999999999932px;color:#1a1a1a;font-size:10.5px;"><span>1.8k</span></div>
<div class="btnY" style="left:1096px;top:548.6px;width:43.5px;height:16.699999999999932px;color:#1a1a1a;font-size:10.5px;background:#ffff00;border-color:#1c1c1c;"><span>Var 1</span></div>
<div class="btn" style="left:1139.5px;top:548.6px;width:44.799999999999955px;height:16.699999999999932px;color:#1a1a1a;font-size:10.5px;"><span>Var 2</span></div>
<div class="t" style="left:1049.8px;top:574.2px;font-size:10px;color:#1a1a1a;letter-spacing:-0.3px;">Low</div>
<div class="spin" style="left:1073px;top:572.5px;width:42.59999999999991px;height:14.0px;background:#ffff00;color:#1a1a1a;"><span>-200</span><i class="sp"><b><svg width="5" height="3" viewBox="0 0 5 3"><path d="M0 3H5L2.5 0Z" fill="#202020"/></svg></b><b><svg width="5" height="3" viewBox="0 0 5 3"><path d="M0 0H5L2.5 3Z" fill="#202020"/></svg></b></i></div>
<div class="t" style="left:1118.5px;top:574.2px;font-size:10px;color:#1a1a1a;letter-spacing:-0.3px;">High</div>
<div class="spin" style="left:1142px;top:572.5px;width:43px;height:14.0px;background:#ffff00;color:#1a1a1a;"><span>200</span><i class="sp"><b><svg width="5" height="3" viewBox="0 0 5 3"><path d="M0 3H5L2.5 0Z" fill="#202020"/></svg></b><b><svg width="5" height="3" viewBox="0 0 5 3"><path d="M0 0H5L2.5 3Z" fill="#202020"/></svg></b></i></div>
<div class="t" style="left:1052.6px;top:601.7px;font-size:10px;color:#1a1a1a;letter-spacing:-0.3px;">Width:</div>
<div class="a" style="left:1087.6px;top:608.5px;width:89.40000000000009px;height:2px;background:#6a6a6a;"></div>
<div class="a" style="left:1087.6px;top:610.5px;width:89.40000000000009px;height:1px;background:#f4f4f4;"></div>
<svg class="a" style="left:1090px;top:600.5px" width="8" height="20.5" viewBox="0 0 8 20.5"><path d="M0.5 0.5H6.5V16.5L3.5 19.5L0.5 16.5Z" fill="#d2d2d2" stroke="#f8f8f8" stroke-width="1"/><path d="M6.5 0.5V16.5L3.5 19.5" fill="none" stroke="#404040" stroke-width="1.2"/></svg>
<div class="t" style="left:1052px;top:629.7px;font-size:10px;color:#1a1a1a;letter-spacing:-0.3px;">Shift:</div>
<div class="a" style="left:1087.6px;top:637px;width:60.40000000000009px;height:2px;background:#6a6a6a;"></div>
<div class="a" style="left:1087.6px;top:639px;width:60.40000000000009px;height:1px;background:#f4f4f4;"></div>
<svg class="a" style="left:1114px;top:628.5px" width="8" height="20.5" viewBox="0 0 8 20.5"><path d="M0.5 0.5H6.5V16.5L3.5 19.5L0.5 16.5Z" fill="#d2d2d2" stroke="#f8f8f8" stroke-width="1"/><path d="M6.5 0.5V16.5L3.5 19.5" fill="none" stroke="#404040" stroke-width="1.2"/></svg>
<div class="btn" style="left:1155.2px;top:629px;width:29.59999999999991px;height:17.700000000000045px;color:#1a1a1a;font-size:10.5px;"><span>Res</span></div>
<div class="a" style="left:0px;top:664px;width:1200px;height:3px;background:#5a5a5a;"></div>
<div class="a" style="left:1192px;top:37px;width:8px;height:627px;background:#d9d9d9;"></div>
</body></html>
